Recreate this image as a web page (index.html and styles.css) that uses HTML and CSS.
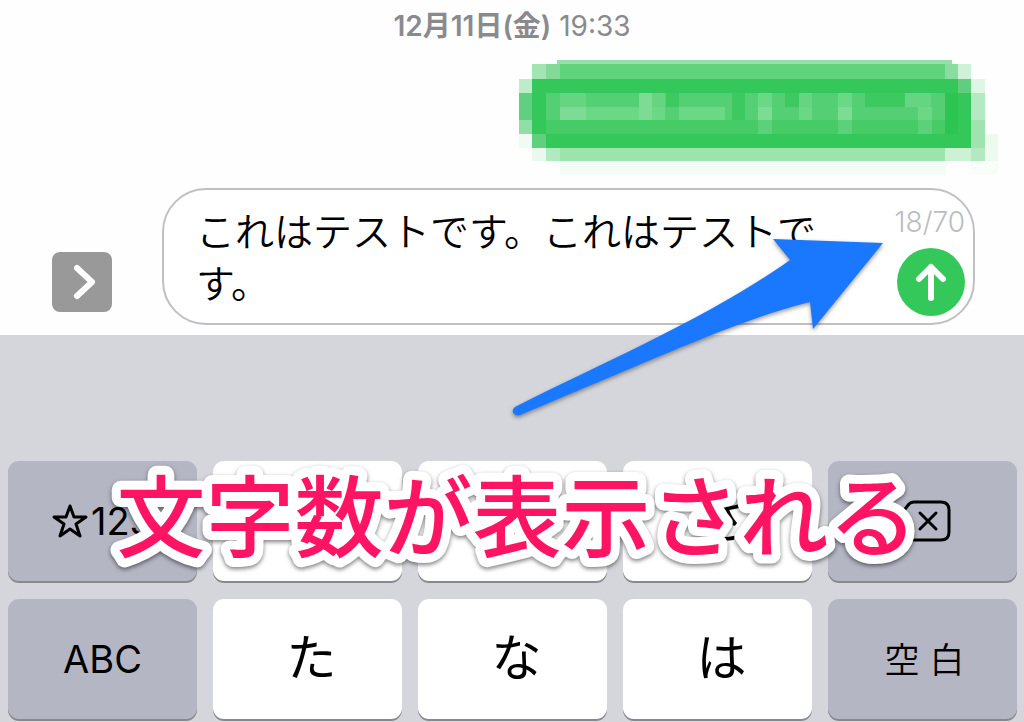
FILE: index.html
```html
<!DOCTYPE html>
<html lang="ja">
  <head>
    <meta charset="UTF-8" />
    <meta name="viewport" content="width=device-width, initial-scale=1.0" />
    <title>メッセージ</title>
    <link rel="stylesheet" href="styles.css">
  </head>
  <body>
    <div class="screen">
      <!-- Messages -->
      <div class="messages">
        <p class="timestamp"><b>12月11日(金)</b> 19:33</p>
        <svg class="sent" viewBox="0 0 480 117" width="480" height="117" shape-rendering="crispEdges" aria-hidden="true">
          <!-- Rows -->
          <path fill="#94dea7" d="M38 1h395v4H38z" />
          <path fill="#60d47c" d="M27 5h400v15H27z" />
          <path fill="#34c759" d="M13 20h439v69H13z" />
          <path fill="#9be5ad" d="M27 89h400v13H27z" />
          <path fill="#f4fcf6" d="M41 102h386v14H41z" />
          <!-- Left edge -->
          <path fill="#a3e4b3" d="M13 5h14v15H13z" />
          <path fill="#82da98" d="M27 5h14v15H27z" />
          <path fill="#bdeccb" d="M0 20h13v14H0z" />
          <path fill="#60cf7e" d="M0 34h13v27H0z" />
          <path fill="#91dfa6" d="M0 61h13v14H0z" />
          <path fill="#f1fbf3" d="M0 75h13v14H0z" />
          <path fill="#60cf7e" d="M13 75h14v14H13z" />
          <path fill="#e9f9ed" d="M13 89h14v13H13z" />
          <path fill="#b2eac0" d="M27 89h14v13H27z" />
          <!-- Right edge -->
          <path fill="#89dda0" d="M426 5h13v15h-13z" />
          <path fill="#cef1d7" d="M439 5h13v29h-13z" />
          <path fill="#60ce7e" d="M439 20h13v14h-13z" />
          <path fill="#def6e4" d="M452 20h14v14h-14z" />
          <path fill="#b4eac2" d="M452 34h14v27h-14z" />
          <path fill="#a0e3b1" d="M452 61h14v28h-14z" />
          <path fill="#ccf1d5" d="M426 89h26v13h-26z" />
          <path fill="#b2e9c1" d="M452 89h14v13h-14z" />
          <path fill="#edfaf0" d="M466 75h13v27h-13z" />
          <path fill="#f8fdf9" d="M452 102h27v14h-27z" />
          <!-- Blurred text -->
          <path fill="#54cf73" d="M27 34h399v27H27z" />
          <path fill="#45cc67" d="M27 61h399v14H27z" />
          <path fill="#2dc552" d="M426 34h13v41h-13z" />
          <path fill="#66d582" d="M41 34h26v14H41zM133 34h13v14h-13zM280 34h13v14h-13zM386 34h26v14h-26z" />
          <path fill="#7ddc94" d="M41 48h26v13H41zM120 34h13v27h-13zM239 48h14v13h-14zM319 48h14v13h-14z" />
          <path fill="#6ad885" d="M67 48h53v13H67zM133 48h13v13h-13zM160 48h46v13h-46zM280 48h13v13h-13zM399 48h14v13h-14zM239 34h14v14h-14zM319 34h14v14h-14z" />
          <path fill="#3cca60" d="M147 34h13v14h-13zM213 34h13v27h-13zM266 34h14v14h-14zM346 34h40v14h-40z" />
          <path fill="#5bd179" d="M239 61h14v14h-14zM319 61h14v14h-14zM399 61h14v14h-14z" />
        </svg>
      </div>

      <!-- Compose bar -->
      <form class="compose">
        <button type="button" class="apps" aria-label="App">
          <svg viewBox="0 0 60 60" width="60" height="60">
            <path d="M25 16 40 30 25 44" />
          </svg>
        </button>
        <div class="field">
          <textarea class="message" rows="2" aria-label="メッセージ" spellcheck="false">これはテストです。これはテストです。</textarea>
          <div class="side">
            <span class="count">18/70</span>
            <button type="button" class="send" aria-label="送信">
              <svg viewBox="0 0 68 68" width="68" height="68">
                <path d="M34 50V19M22 31 34 19 46 31" />
              </svg>
            </button>
          </div>
        </div>
      </form>

      <!-- Keyboard -->
      <div class="keyboard">
        <button type="button" class="key dark"><svg class="star" viewBox="0 0 36 36" width="36" height="36" aria-hidden="true"><path d="M18 3 22 14H34L24 21 28 33 18 26 8 33 12 21 2 14H14Z" /></svg>123</button>
        <button type="button" class="key">あ</button>
        <button type="button" class="key">か</button>
        <button type="button" class="key">さ</button>
        <button type="button" class="key dark" aria-label="削除">
          <svg class="erase" viewBox="0 0 56 42" width="56" height="42">
            <path d="M19 2H46Q54 2 54 10V32Q54 40 46 40H19Q16 40 14 38L3 24Q1 21 3 18L14 4Q16 2 19 2Z" />
            <path d="M25 13 41 29M41 13 25 29" />
          </svg>
        </button>
        <button type="button" class="key dark">ABC</button>
        <button type="button" class="key">た</button>
        <button type="button" class="key">な</button>
        <button type="button" class="key">は</button>
        <button type="button" class="key dark space">空 白</button>
      </div>

      <!-- Annotations -->
      <svg class="arrow" viewBox="0 0 380 190" width="380" height="190" aria-hidden="true">
        <path d="M261 3 371 7 301 93 298 66C230 83 168 112 8 179C2 181-2 175 3 171C90 127 200 80 278 24Z" />
      </svg>
      <svg class="caption" height="140">
        <text x="50%" y="97">文字数が表示される</text>
      </svg>
    </div>
  </body>
</html>
```
FILE: styles.css
```css
body {
  margin: 0;
  background-color: #fefefe;
  font-family: Inter, "Noto Sans CJK JP", sans-serif;
  color: #000;
}

button,
textarea {
  font-family: inherit;
  font-weight: inherit;
  color: inherit;
  border: 0;
  padding: 0;
}

svg {
  display: block;
  fill: none;
  stroke-linecap: round;
  stroke-linejoin: round;
}

.screen {
  position: relative;
  min-height: 100vh;
  display: flex;
  flex-direction: column;
  overflow: hidden;
}

/* Messages */
.messages {
  display: flex;
  flex-direction: column;
  padding: 8px 25px 0;
}

.timestamp {
  margin: 0 0 15px;
  font-size: 28px;
  line-height: 36px;
  text-align: center;
  color: #8a8a8e;
}

.timestamp b {
  font-weight: 600;
}

.sent {
  align-self: flex-end;
}

/* Compose bar */
.compose {
  display: flex;
  align-items: flex-end;
  gap: 50px;
  margin: 0;
  padding: 12px 49px 10px 52px;
}

.apps {
  margin-bottom: 13px;
  border-radius: 8px;
  background-color: #999;
}

.apps path {
  stroke: #fff;
  stroke-width: 6px;
}

.field {
  flex: 1;
  display: flex;
  box-sizing: border-box;
  border: 2px solid #c0c0c4;
  border-radius: 44px;
  padding: 16px 8px 7px 32px;
  background-color: #fff;
}

.message {
  flex: 1;
  min-width: 0;
  margin-right: 40px;
  font-size: 39px;
  font-weight: 350;
  line-height: 52px;
  background: transparent;
  resize: none;
  outline: 0;
  overflow: hidden;
}

.side {
  display: flex;
  flex-direction: column;
  align-items: flex-end;
  gap: 10px;
}

.count {
  font-size: 28px;
  font-weight: 300;
  line-height: 32px;
  color: #bcbcc0;
}

.send {
  border-radius: 50%;
  background-color: #34c759;
}

.send path {
  stroke: #fff;
  stroke-width: 6px;
}

/* Keyboard */
.keyboard {
  flex: 1;
  display: grid;
  grid-template-columns: repeat(5, 1fr);
  grid-auto-rows: 120px;
  align-content: end;
  gap: 18px 16px;
  padding: 126px 7px 3px 8px;
  background-color: #d5d6dc;
}

.key {
  display: flex;
  align-items: center;
  justify-content: center;
  gap: 3px;
  padding: 0 0 10px 8px;
  border-radius: 11px;
  background-color: #fff;
  box-shadow: 0 2px 0 #88898e;
  font-size: 50px;
}

.key.dark {
  padding: 0;
  background-color: #b4b6c4;
  font-size: 38px;
}

.key.space {
  padding: 0 0 4px 4px;
  font-size: 35px;
  font-weight: 350;
}

.star,
.erase {
  stroke: #000;
  stroke-width: 3px;
}

/* Annotations */
.arrow {
  position: absolute;
  top: 236px;
  left: 50%;
  fill: #1a78ff;
  filter: drop-shadow(0 2px 2px rgba(0, 0, 0, 0.4));
}

.caption {
  position: absolute;
  bottom: 129px;
  left: 5px;
  width: 100%;
  overflow: visible;
  font-family: "Noto Sans CJK JP", sans-serif;
  font-size: 89px;
  font-weight: 500;
  text-anchor: middle;
  fill: #ff1464;
  stroke: #fff;
  stroke-width: 18px;
  paint-order: stroke fill;
  filter: drop-shadow(0 2px 2px rgba(0, 0, 0, 0.5));
  pointer-events: none;
}
```
